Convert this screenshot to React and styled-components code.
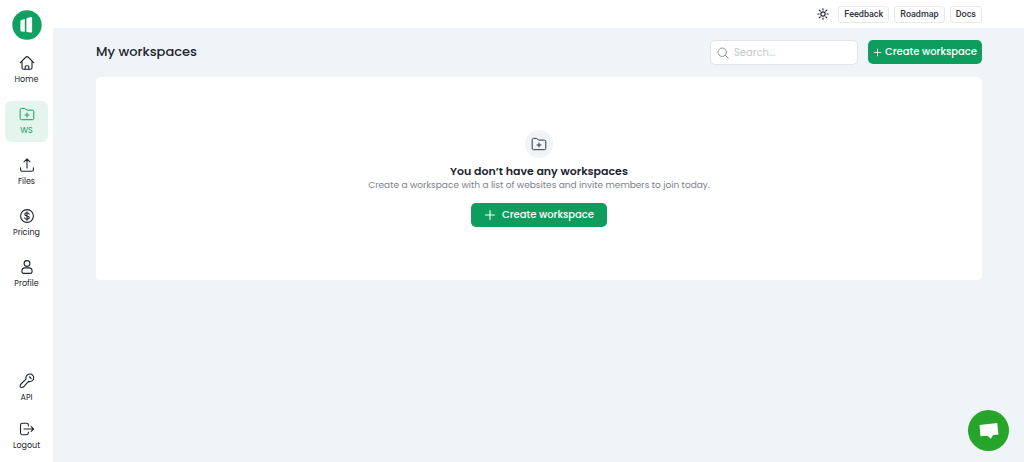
import React from 'react';
import styled, {createGlobalStyle} from "styled-components";

const GlobalStyle = createGlobalStyle`
  * {
    box-sizing: border-box;
  }

  body {
    margin: 0;
    background: #eff4f8;
    color: #1c2430;
    font-family: Poppins, Inter, "Open Sans", sans-serif;
  }

  button, input {
    font-family: inherit;
  }
`

const Layout = styled.div`
  display: flex;
  min-height: 100vh;
`

const Sidebar = styled.nav`
  flex: none;
  width: 53px;
  padding: 10px 5px 5px;
  display: flex;
  flex-direction: column;
  background: white;
`

const LogoLink = styled.a`
  align-self: center;
  height: 30px;
  margin-bottom: 10px;
`

const NavGroup = styled.div`
  display: flex;
  flex-direction: column;
  gap: ${props => props.$gap}px;
`

const NavItem = styled.a`
  height: 41px;
  display: flex;
  flex-direction: column;
  align-items: center;
  justify-content: center;
  gap: 3px;
  border-radius: 6px;
  font-size: 8px;
  line-height: 12px;
  text-decoration: none;
  color: ${props => props.$active ? "#10a061" : "#1c2430"};
  background: ${props => props.$active ? "#e4f5ed" : "transparent"};
`

const Spacer = styled.div`
  flex: 1;
`

const Content = styled.div`
  flex: 1;
  min-width: 0;
`

const TopBar = styled.header`
  height: 28px;
  padding: 0 42px;
  display: flex;
  align-items: center;
  justify-content: flex-end;
  gap: 5px;
  background: white;
`

const ThemeButton = styled.button`
  display: flex;
  margin-right: 4px;
  padding: 0;
  border: none;
  background: none;
  color: #1c2430;
  cursor: pointer;
`

const TopLink = styled.a`
  padding: 0 5px;
  border: 1px solid #e6e9ed;
  border-radius: 3px;
  color: #2f3742;
  font-family: Roboto, sans-serif;
  font-size: 9px;
  font-weight: 500;
  line-height: 15px;
  text-decoration: none;
`

const Main = styled.main`
  padding: 12px 42px 12px 43px;
`

const Heading = styled.div`
  display: flex;
  align-items: flex-start;
  gap: 10px;
  margin-bottom: 12px;
`

const Title = styled.h1`
  flex: 1;
  margin: 0;
  font-size: 13px;
  font-weight: 500;
  line-height: 24px;
`

const SearchBox = styled.label`
  width: 148px;
  height: 25px;
  padding: 0 6px;
  display: flex;
  align-items: center;
  gap: 5px;
  border: 1px solid #e0e5ea;
  border-radius: 5px;
  background: white;
  color: #8b929b;
`

const SearchInput = styled.input`
  flex: 1;
  min-width: 0;
  padding: 0;
  border: none;
  outline: none;
  background: none;
  font-size: 10px;

  &::placeholder {
    color: #c6cacf;
  }
`

const CreateButton = styled.button`
  height: 24px;
  padding: 0 ${props => props.$wide ? 13 : 5}px;
  display: flex;
  align-items: center;
  gap: ${props => props.$wide ? 6 : 3}px;
  border: none;
  border-radius: 5px;
  background: #0f9d5e;
  color: white;
  font-size: 10px;
  font-weight: 500;
  white-space: nowrap;
  cursor: pointer;
`

const Card = styled.section`
  min-height: 203px;
  padding: 20px;
  display: flex;
  flex-direction: column;
  align-items: center;
  justify-content: center;
  border-radius: 5px;
  background: white;
  text-align: center;
`

const IconCircle = styled.div`
  width: 28px;
  height: 28px;
  margin-bottom: 5px;
  display: flex;
  align-items: center;
  justify-content: center;
  border-radius: 50%;
  background: #f0f4f7;
  color: #2f3742;
`

const EmptyTitle = styled.h2`
  margin: 0;
  font-size: 11px;
  font-weight: 600;
  line-height: 16px;
`

const EmptyText = styled.p`
  margin: 0 0 11px;
  color: #7b818a;
  font-size: 9px;
  line-height: 13px;
`

const ChatButton = styled.button`
  position: fixed;
  right: 15px;
  bottom: 11px;
  width: 41px;
  height: 41px;
  padding: 0;
  display: flex;
  align-items: center;
  justify-content: center;
  border: none;
  border-radius: 50%;
  background: #27a52b;
  cursor: pointer;
`

const Icon = ({size = 16, stroke = 1.1, children}) => (
    <svg width={size} height={size} viewBox="0 0 16 16" fill="none" stroke="currentColor"
         strokeWidth={stroke} strokeLinecap="round" strokeLinejoin="round" aria-hidden="true">
        {children}
    </svg>
)

const HomeIcon = () => (
    <Icon>
        <path d="M1.3 7.6 7 2a1.4 1.4 0 0 1 2 0l5.7 5.6M3 6.2v6.6c0 .9.6 1.5 1.5 1.5h7c.9 0 1.5-.6 1.5-1.5V6.2"/>
        <path d="M6.2 14.2v-2.5c0-.6.4-1 1-1h1.6c.6 0 1 .4 1 1v2.5"/>
    </Icon>
)

const FolderIcon = ({size}) => (
    <Icon size={size} stroke={1}>
        <path d="M1.2 3.7c0-.8.5-1.3 1.3-1.3h3c.4 0 .7.1.9.4l1.1 1.3h6c.8 0 1.3.5 1.3 1.3v7c0 .8-.5 1.3-1.3 1.3h-11c-.8 0-1.3-.5-1.3-1.3z"/>
        <path d="M8 7v4M6 9h4"/>
    </Icon>
)

const UploadIcon = () => (
    <Icon>
        <path d="M8 11V2M5 4.8l3-3 3 3M1.6 10.8v2c0 .8.6 1.4 1.4 1.4h10c.8 0 1.4-.6 1.4-1.4v-2"/>
    </Icon>
)

const DollarIcon = () => (
    <Icon>
        <circle cx="8" cy="8" r="6.4"/>
        <path d="M10.2 6.2C10 5.3 9.2 4.8 8 4.8S5.8 5.4 5.8 6.4c0 2.3 4.5.9 4.5 3.2 0 1-.9 1.6-2.3 1.6s-2.3-.6-2.4-1.5M8 3.7v8.6"/>
    </Icon>
)

const ProfileIcon = () => (
    <Icon>
        <circle cx="8" cy="4.500" r="2.900"/>
        <path d="M5.9 8.9h4.2c1.7 0 3 1.5 3 3.4 0 1.2-.8 2.1-1.9 2.1H4.8c-1.1 0-1.9-.9-1.9-2.1 0-1.9 1.3-3.4 3-3.4z"/>
    </Icon>
)

const KeyIcon = () => (
    <Icon>
        <path d="M7 6.2c-.4-1.5 0-3 1.100-4 1.700-1.500 4.300-1.400 5.700.1 1.400 1.600 1.200 4-.4 5.300-1.100.9-2.500 1.200-3.900.8l-4.700 5.200c-.5.6-1.200.9-2 .9H2.200c-.6 0-1-.4-1-1v-.7c0-.7.3-1.300.8-1.800z"/>
        <path d="M10.3 3.9c1 .1 1.7.8 1.8 1.8"/>
    </Icon>
)

const LogoutIcon = () => (
    <Icon>
        <path d="M9.4 5V4.200c0-1.200-.7-1.900-1.900-1.900H3.400c-1.200 0-1.900.7-1.900 1.900v7.600c0 1.200.7 1.900 1.900 1.900h4.100c1.200 0 1.900-.7 1.900-1.900V11M5 8h9.400M12.200 5.700 14.500 8l-2.300 2.300"/>
    </Icon>
)

const SunIcon = () => (
    <Icon size={12} stroke={1.5}>
        <circle cx="8" cy="8" r="2.900"/>
        <path d="M8 1v1.700M8 13.300V15M1 8h1.700M13.300 8H15M3 3l1.300 1.300M11.700 11.700 13 13M3 13l1.300-1.300M11.700 4.300 13 3"/>
    </Icon>
)

const SearchIcon = () => (
    <Icon size={12} stroke={1.3}>
        <circle cx="7" cy="7" r="5.600"/>
        <path d="m11.200 11.200 3.800 3.800"/>
    </Icon>
)

const PlusIcon = ({size}) => (
    <Icon size={size} stroke={1.4}>
        <path d="M8 2v12M2 8h12"/>
    </Icon>
)

const Logo = () => (
    <svg width="30" height="30" viewBox="0 0 30 30" aria-hidden="true">
        <circle cx="15" cy="15" r="14.700" fill="#10a061"/>
        <path fill="white" d="M8.400 11.200q0-1 .9-1.300l3.500-1V21.800l-3.500-.4q-.9-.2-.9-1.100zM14.400 9q0-.9.8-1.100l3.500-.8q1.400-.2 1.400 1v13.300q0 1.200-1.400 1.200l-4.300-.5z"/>
    </svg>
)

const mainLinks = [
    {label: "Home", icon: <HomeIcon/>},
    {label: "WS", icon: <FolderIcon/>, active: true},
    {label: "Files", icon: <UploadIcon/>},
    {label: "Pricing", icon: <DollarIcon/>},
    {label: "Profile", icon: <ProfileIcon/>},
]

const footerLinks = [
    {label: "API", icon: <KeyIcon/>},
    {label: "Logout", icon: <LogoutIcon/>},
]

const NavLinks = ({links, gap}) => (
    <NavGroup $gap={gap}>
        {links.map(link => (
            <NavItem key={link.label} href="#" $active={link.active}>
                {link.icon}
                {link.label}
            </NavItem>
        ))}
    </NavGroup>
)

const App = () => {
    return (
        <>
            <GlobalStyle/>
            <Layout>
                <Sidebar>
                    <LogoLink href="#"><Logo/></LogoLink>
                    <NavLinks links={mainLinks} gap={10}/>
                    <Spacer/>
                    <NavLinks links={footerLinks} gap={7}/>
                </Sidebar>
                <Content>
                    <TopBar>
                        <ThemeButton type="button"><SunIcon/></ThemeButton>
                        <TopLink href="#">Feedback</TopLink>
                        <TopLink href="#">Roadmap</TopLink>
                        <TopLink href="#">Docs</TopLink>
                    </TopBar>
                    <Main>
                        <Heading>
                            <Title>My workspaces</Title>
                            <SearchBox htmlFor="search">
                                <SearchIcon/>
                                <SearchInput id="search" type="text" placeholder="Search..."/>
                            </SearchBox>
                            <CreateButton type="button">
                                <PlusIcon size={9}/>
                                Create workspace
                            </CreateButton>
                        </Heading>
                        <Card>
                            <IconCircle><FolderIcon size={16}/></IconCircle>
                            <EmptyTitle>You don’t have any workspaces</EmptyTitle>
                            <EmptyText>Create a workspace with a list of websites and invite members to join today.</EmptyText>
                            <CreateButton type="button" $wide>
                                <PlusIcon size={12}/>
                                Create workspace
                            </CreateButton>
                        </Card>
                    </Main>
                </Content>
            </Layout>
            <ChatButton type="button">
                <svg width="22" height="20" viewBox="0 0 22 20" fill="white" aria-hidden="true">
                    <path d="m1.500 4 17.700-2 1.300 11.400-5.200.6-2.600 3.800-3.200-3-7 .4z"/>
                </svg>
            </ChatButton>
        </>
    );
};

export default App;
